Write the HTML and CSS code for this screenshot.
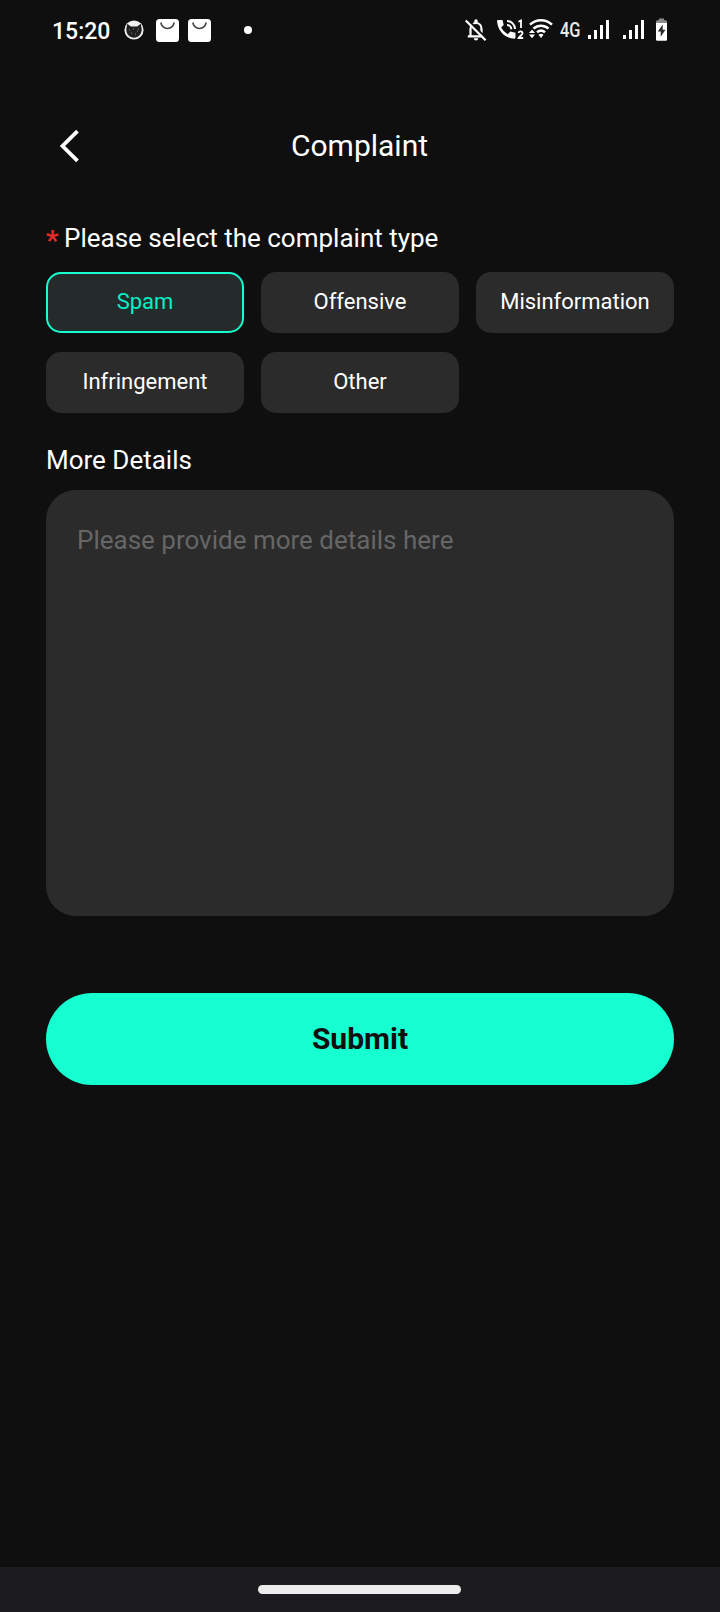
FILE: index.html
```html
<!DOCTYPE html>
<html lang="en">
<head>
<meta charset="utf-8">
<title>Complaint</title>
<link rel="stylesheet" href="styles.css">
</head>
<body>
<div class="screen">
  <div class="status-bar">
    <span class="clock">15:20</span>
    <svg class="ic-cat" width="20" height="20" viewBox="0 0 20 20"><circle cx="10" cy="10" r="9.600" fill="#f2f2f2"/><path d="M3.300 3.800 6.800 6.600h6.400l3.500-2.800 1 5.200c.2 5-3.200 8.700-7.700 8.700S2.100 14 2.300 9z" fill="#202020"/><path d="M5 10h1M9 9h1M13 11h1M7 13h1M11 14h1M14 9h1" stroke="#888" stroke-width="1"/></svg>
    <svg class="ic-bag" width="23" height="23" viewBox="0 0 23 23"><rect width="23" height="23" rx="3.5" fill="#fff"/><path d="M5 3.500a6.500 6 0 0 0 13 0" fill="none" stroke="#444" stroke-width="1.700"/></svg>
    <svg class="ic-bag2" width="23" height="23" viewBox="0 0 23 23"><rect width="23" height="23" rx="3.5" fill="#fff"/><path d="M5 3.500a6.500 6 0 0 0 13 0" fill="none" stroke="#444" stroke-width="1.700"/></svg>
    <span class="dot"></span>
    <span class="spacer"></span>
    <svg class="ic-bell" width="22" height="24" viewBox="0 0 22 24"><path d="M5.500 18V11c0-3.500 2.300-6 5.500-6s5.500 2.500 5.500 6v7M2.800 18.300h16.400" fill="none" stroke="#fff" stroke-width="2.200"/><path d="M9.300 4.500V3a1.700 1.700 0 0 1 3.400 0v1.500zM8.800 20.300h4.400a2.200 2.200 0 0 1-4.400 0z" fill="#fff"/><path d="M2.300 1.200 22 20.900" stroke="#0f0f0f" stroke-width="2"/><path d="M.8 2.500 20.600 22.300" stroke="#fff" stroke-width="2.200"/></svg>
    <svg class="ic-call" width="27" height="22" viewBox="0 0 27 22"><path d="M1.200 1h4.300l1.200 5-2.600 2.600a16 16 0 0 0 6.600 6.600l2.600-2.600 5.200 1.200v4.700c0 .7-.5 1.200-1.200 1.200C8.300 19.700.5 11.500.1 2.200 0 1.500.5 1 1.200 1z" fill="#fff"/><path d="M10 2a8 8 0 0 1 8 8M10 6a4.300 4.300 0 0 1 4.300 4.300" fill="none" stroke="#fff" stroke-width="2"/><path d="M21.500 2.800 24 1.500V9M21.500 14c.4-2.200 4.300-2 4 .3-.2 1.500-2.700 2.800-3.800 4.700h4.500" fill="none" stroke="#fff" stroke-width="1.800"/></svg>
    <svg class="ic-wifi" width="24" height="22" viewBox="0 0 24 22"><path d="M1 6.700c6.300-6 15.700-6 22 0M4.500 10.700c4.400-4 10.600-4 15 0M8 14.300c2.400-2 5.600-2 8 0" fill="none" stroke="#fff" stroke-width="2.500"/><path d="M9.500 16.700c1.600-1.200 3.400-1.200 5 0L12 20z M0 15l3-3.600L6 15zM0 16.600h6l-3 3.600z" fill="#fff"/></svg>
    <span class="network">4G</span>
    <svg class="ic-signal" width="22" height="19" viewBox="0 0 22 19"><path d="M0 15h3v4H0zM6 10h3v9H6zM12 5h3v14h-3zM18 0h3v19h-3z" fill="#fff"/></svg>
    <svg class="ic-signal2" width="22" height="19" viewBox="0 0 22 19"><path d="M0 15h3v4H0zM6 10h3v9H6zM12 5h3v14h-3zM18 0h3v19h-3z" fill="#fff"/></svg>
    <svg class="ic-battery" width="12" height="23" viewBox="0 0 12 23"><path d="M0 5V3.500Q0 2 3 2V.5h5V2q3 0 3 1.500V5z" fill="#8c8c8c"/><path d="M0 5h11v16.500q0 1.300-1.300 1.300H1.300Q0 22.800 0 21.500z" fill="#fff"/><path d="M6.700 6.500 1.800 13.500h2.900v5.300l4.800-7H6.700z" fill="#2b2b2b"/></svg>
  </div>

  <header class="header">
    <svg class="back" width="22" height="34" viewBox="0 0 22 34"><path d="M18.500 2.200 3.500 17l15 14.800" fill="none" stroke="#fff" stroke-width="3.800"/></svg>
    <h1 class="title">Complaint</h1>
  </header>

  <main class="form">
    <div class="label"><span class="required">*</span>Please select the complaint type</div>
    <div class="types">
      <button class="chip chip-active">Spam</button>
      <button class="chip">Offensive</button>
      <button class="chip">Misinformation</button>
      <button class="chip">Infringement</button>
      <button class="chip">Other</button>
    </div>
    <div class="label label-details">More Details</div>
    <div class="details">Please provide more details here</div>
    <button class="submit">Submit</button>
  </main>

  <footer class="nav-bar"><span class="handle"></span></footer>
</div>
</body>
</html>
```

FILE: styles.css
```css
* { box-sizing: border-box; }
body { margin: 0; background: #0f0f0f; color: #fff; font-family: Roboto, sans-serif; }
button { border: 0; padding: 0; font-family: inherit; color: inherit; }
svg { display: block; flex: none; }

.screen { display: flex; flex-direction: column; width: 720px; height: 1612px; }

.status-bar { display: flex; align-items: center; height: 60px; padding: 0 52px; }
.clock { width: 57px; font-size: 23px; font-weight: 500; line-height: 28px; margin-top: 4px; white-space: nowrap; }
.ic-cat { margin-left: 15px; }
.ic-bag { margin: 1px 0 0 12px; }
.ic-bag2 { margin: 1px 0 0 9px; }
.dot { width: 8px; height: 8px; margin-left: 33px; border-radius: 50%; background: #fff; }
.spacer { flex: 1; }
.ic-bell { margin-right: 10px; }
.ic-call { margin-right: 5px; }
.ic-wifi { margin: 0 7px 2px 0; }
.network { width: 21px; margin-right: 7px; font-size: 20px; font-weight: 500; line-height: 24px; color: #ececec; white-space: nowrap; transform: scaleX(0.82); transform-origin: left; }
.ic-signal { margin: 0 13px 1px 0; }
.ic-signal2 { margin: 0 11px 1px 0; }
.ic-battery { margin-bottom: 1px; }

.header { display: grid; grid-template-columns: 46px 1fr 46px; align-items: center; height: 92px; margin-top: 40px; padding: 0 0 1px; }
.back { margin-left: 59px; }
.title { margin: 0; padding-right: 1px; text-align: center; font-size: 30px; font-weight: 400; line-height: 40px; }

.form { display: flex; flex-direction: column; flex: 1; padding: 28px 46px 0; }
.label { display: flex; height: 36px; line-height: 36px; font-size: 26px; }
.required { width: 18px; padding-top: 3px; color: #e32b2b; font-size: 28px; font-weight: 700; }
.types { display: grid; grid-template-columns: repeat(3, 198px); gap: 19px 17px; margin-top: 16px; }
.chip { height: 61px; padding-bottom: 2px; border-radius: 15px; background: #2b2b2b; font-size: 22px; line-height: 30px; }
.chip-active { border: 2px solid #16ffd0; background: #252b2b; color: #02efc9; }
.label-details { margin-top: 29px; }
.details { height: 426px; margin-top: 12px; padding: 32px 31px; border-radius: 30px; background: #2b2b2b; color: #666; font-size: 26px; line-height: 36px; }
.submit { height: 92px; margin-top: 77px; border-radius: 46px; background: #16ffd0; color: #0f0f0f; font-size: 30px; font-weight: 700; line-height: 40px; }

.nav-bar { display: flex; justify-content: center; height: 45px; padding: 18px 1px 0 0; background: #1c1c1e; }
.handle { width: 203px; height: 9px; border-radius: 5px; background: #ececec; }
```
